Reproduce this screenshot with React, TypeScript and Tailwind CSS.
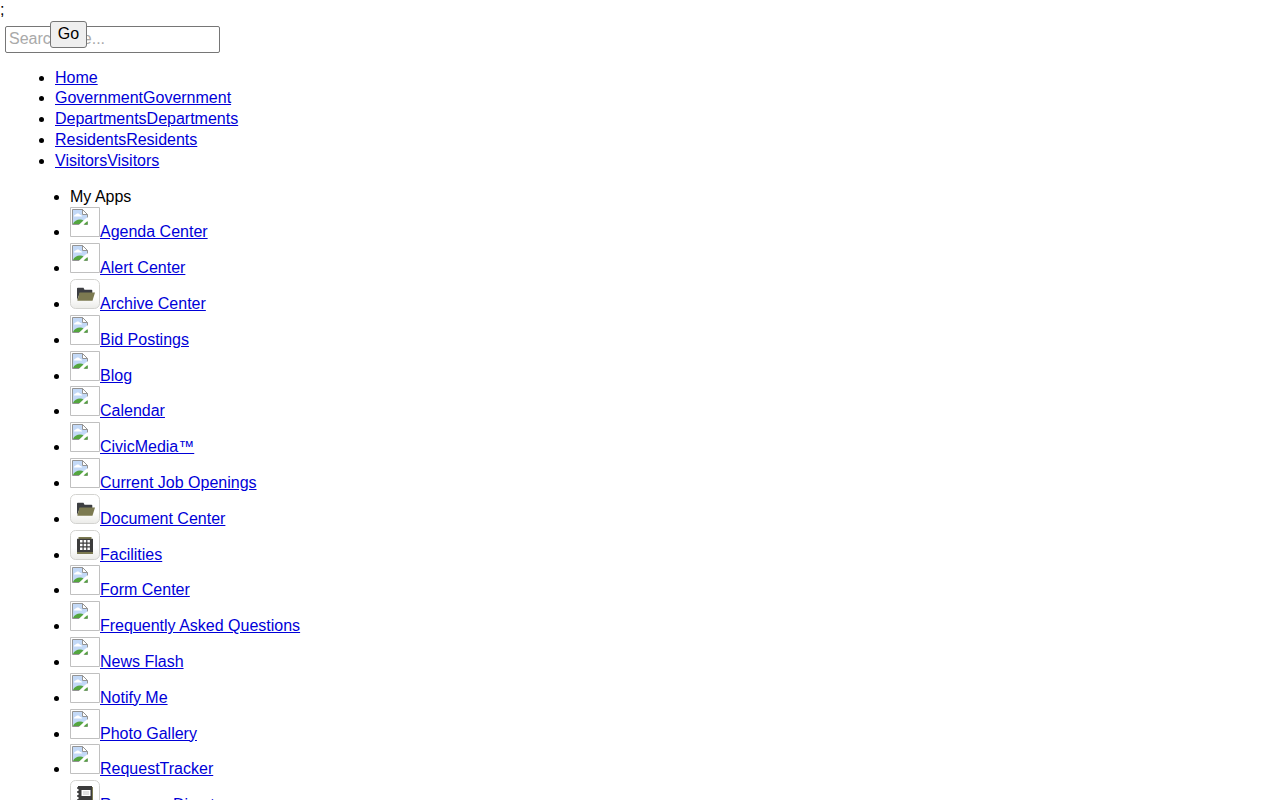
import React from 'react';

const navLinks = [
  'Home',
  'GovernmentGovernment',
  'DepartmentsDepartments',
  'ResidentsResidents',
  'VisitorsVisitors',
];

const apps = [
  { name: 'Agenda Center' },
  { name: 'Alert Center' },
  { name: 'Archive Center', icon: 'folder' },
  { name: 'Bid Postings' },
  { name: 'Blog' },
  { name: 'Calendar' },
  { name: 'CivicMedia™' },
  { name: 'Current Job Openings' },
  { name: 'Document Center', icon: 'folder' },
  { name: 'Facilities', icon: 'building' },
  { name: 'Form Center' },
  { name: 'Frequently Asked Questions' },
  { name: 'News Flash' },
  { name: 'Notify Me' },
  { name: 'Photo Gallery' },
  { name: 'RequestTracker' },
  { name: 'Resource Directory', icon: 'book' },
];

function MissingIcon() {
  return (
    <svg className="inline align-baseline" width="30" height="30" viewBox="0 0 30 30" fill="none">
      <path d="M.5 .5h29v29H.5z" stroke="#c0c0c0" />
      <path d="M2.5 2.5h10l5 5v10h-15z" fill="#c3d9f7" />
      <path d="M4 9.5c0-1.500 1-2 2-2 .5-1.500 3.500-1.500 4 .5 1.500 0 2 .5 2 1.500z" fill="#fff" />
      <path d="M3 17c1-3 4-4.500 7-4.500 3 0 5 2 7 4.500z" fill="#54a63f" />
      <path d="M2.500 17.500v-15h10l5 5v10z" stroke="#949494" />
      <path d="M12.500 2.500v5h5z" fill="#fff" stroke="#949494" />
      {/* tear across the corner */}
      <path d="M8.500 18.200L15 12l3.200-2v4.200L13.500 18.200z" fill="#fff" />
      <path d="M13.500 17.500l4-3.500v3.500z" fill="#54a63f" />
    </svg>
  );
}

function AppIcon({ icon }: { icon: string }) {
  return (
    <svg className="inline align-baseline" width="30" height="30" viewBox="0 0 30 30" fill="none">
      <defs>
        <linearGradient id={`tile-${icon}`} x1="0" y1="0" x2="0" y2="1">
          <stop offset=".6" stopColor="#fff" />
          <stop offset="1" stopColor="#ebebe8" />
        </linearGradient>
      </defs>
      <rect x=".5" y=".5" width="29" height="29" rx="5" fill={`url(#tile-${icon})`} stroke="#d3d3d0" />
      {icon === 'folder' && (
        <>
          <path d="M7 21V9.500q0-.8.8-.8h5.700l1 2h7q.8 0 .8.800V14H10z" fill="#3c3e42" />
          <path d="M9.500 13.500H25l-2.500 8.300H7.300z" fill="#7c7a51" />
        </>
      )}
      {icon === 'building' && (
        <>
          <path d="M8.500 7h13v2h-13zM7 22h16v2H7z" fill="#7c7a51" />
          <path d="M7 8.800h16V22H7z" fill="#3c3c3c" />
          <path
            d="M10 10h2.500v2.500H10zM13.700 10h2.500v2.500h-2.500zM17.400 10h2.500v2.500h-2.500zM10 13.700h2.500v2.500H10zM13.700 13.700h2.500v2.500h-2.500zM17.400 13.700h2.500v2.500h-2.500zM10 17.400h2.500v2.500H10zM13.700 17.400h2.500v2.500h-2.500zM17.400 17.400h2.500v2.500h-2.500z"
            fill="#fff"
          />
        </>
      )}
      {icon === 'book' && (
        <>
          <path d="M8 6h14v17H8z" fill="#3c3c3c" />
          <path d="M22 7h1v15h-1z" fill="#7c7a51" />
          <path d="M7 8h3M7 12h3M7 16h3M7 20h3" stroke="#3c3c3c" strokeWidth="1.500" />
          <path d="M7 10h2M7 14h2M7 18h2" stroke="#fff" />
          <path d="M11.500 10h9v6h-9z" fill="#fff" />
          <path d="M13 12h6M13 14h6" stroke="#b5b5b5" strokeWidth=".8" />
        </>
      )}
    </svg>
  );
}

export default function App() {
  return (
    <div className="h-screen overflow-hidden bg-white font-['Liberation_Sans',Arial,sans-serif] text-base leading-[1.3] text-black">
      <div>;</div>
      <form className="relative mx-[5px] mt-[5px] h-[27px]">
        <input
          type="text"
          placeholder="Search Site..."
          className="block h-[27px] w-[215px] rounded-[2px] border border-[#767676] bg-white px-[3px] placeholder:text-[#a9a9a9]"
        />
        <button
          type="button"
          className="absolute -top-[5px] left-[45px] flex h-[27px] w-[37px] items-center justify-center rounded-[3px] border border-[#767676] bg-[#efefef] leading-none"
        >
          Go
        </button>
      </form>
      <ul className="mt-[14.8px] list-disc pl-[55px]">
        {navLinks.map((link) => (
          <li key={link}>
            <a href="#" className="text-[#0000d8] underline">{link}</a>
          </li>
        ))}
      </ul>
      <ul className="mt-[15px] list-disc pl-[70px]">
        <li>My Apps</li>
        {apps.map((app) => (
          <li key={app.name}>
            <a href="#" className="text-[#0000d8] underline">
              {app.icon ? <AppIcon icon={app.icon} /> : <MissingIcon />}
              {app.name}
            </a>
          </li>
        ))}
      </ul>
    </div>
  );
}
